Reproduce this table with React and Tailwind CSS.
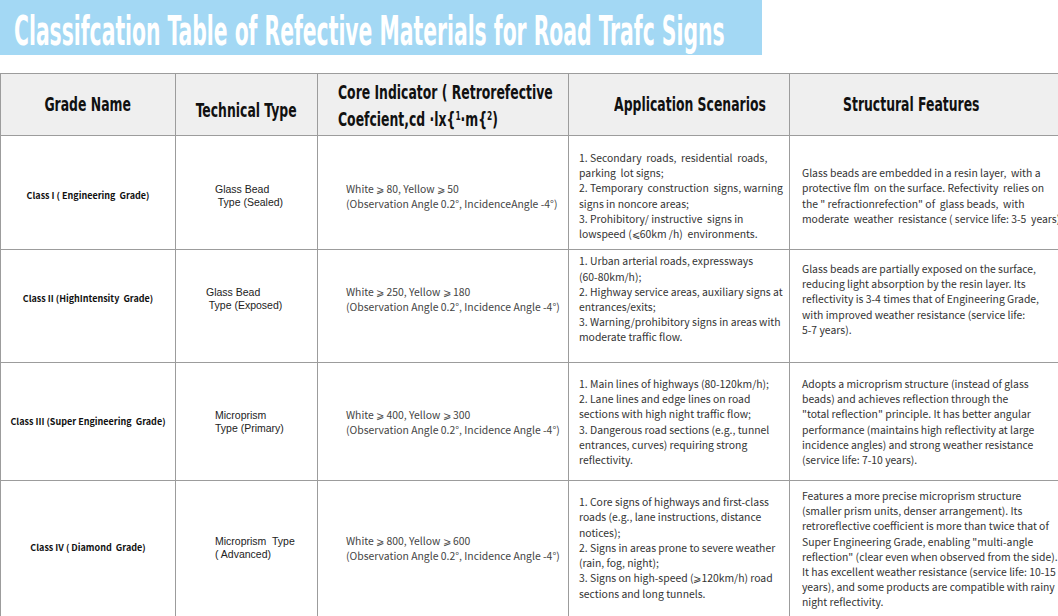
import React from "react";

const rows = [
  {
    grade: "Class I ( Engineering  Grade)",
    tech: ["Glass Bead", " Type (Sealed)"],
    techPad: "pl-[39px]",
    core: ["White ⩾ 80, Yellow ⩾ 50", "(Observation Angle 0.2°, IncidenceAngle -4°)"],
    app: [
      "1. Secondary  roads,  residential  roads,",
      "parking  lot signs;",
      "2. Temporary  construction  signs, warning",
      "signs in noncore areas;",
      "3. Prohibitory/ instructive  signs in",
      "lowspeed (⩽60km /h)  environments.",
    ],
    feat: [
      "Glass beads are embedded in a resin layer,  with a",
      "protective flm  on the surface. Refectivity  relies on",
      "the \" refractionrefection\" of  glass beads,  with",
      "moderate  weather  resistance ( service life: 3-5  years).",
    ],
    h: "h-[114px]",
    shift: "pt-[6px]",
    featAlign: "items-center pt-[6px]",
  },
  {
    grade: "Class II (HighIntensity  Grade)",
    tech: ["Glass Bead", " Type (Exposed)"],
    techPad: "pl-[30px]",
    core: ["White ⩾ 250, Yellow ⩾ 180", "(Observation Angle 0.2°, Incidence Angle -4°)"],
    app: [
      "1. Urban arterial roads, expressways",
      "(60-80km/h);",
      "2. Highway service areas, auxiliary signs at",
      "entrances/exits;",
      "3. Warning/prohibitory signs in areas with",
      "moderate traffic flow.",
    ],
    feat: [
      "Glass beads are partially exposed on the surface,",
      "reducing light absorption by the resin layer. Its",
      "reflectivity is 3-4 times that of Engineering Grade,",
      "with improved weather resistance (service life:",
      "5-7 years).",
    ],
    h: "h-[113px]",
    shift: "pb-[14px]",
    featAlign: "items-start pt-[11px]",
  },
  {
    grade: "Class III (Super Engineering  Grade)",
    tech: ["Microprism", "Type (Primary)"],
    techPad: "pl-[39px]",
    core: ["White ⩾ 400, Yellow ⩾ 300", "(Observation Angle 0.2°, Incidence Angle -4°)"],
    app: [
      "1. Main lines of highways (80-120km/h);",
      "2. Lane lines and edge lines on road",
      "sections with high night traffic flow;",
      "3. Dangerous road sections (e.g., tunnel",
      "entrances, curves) requiring strong",
      "reflectivity.",
    ],
    feat: [
      "Adopts a microprism structure (instead of glass",
      "beads) and achieves reflection through the",
      "\"total reflection\" principle. It has better angular",
      "performance (maintains high reflectivity at large",
      "incidence angles) and strong weather resistance",
      "(service life: 7-10 years).",
    ],
    h: "h-[118px]",
    shift: "",
    featAlign: "items-center",
  },
  {
    grade: "Class IV ( Diamond  Grade)",
    tech: ["Microprism  Type", "( Advanced)"],
    techPad: "pl-[39px]",
    core: ["White ⩾ 800, Yellow ⩾ 600", "(Observation Angle 0.2°, Incidence Angle -4°)"],
    app: [
      "1. Core signs of highways and first-class",
      "roads (e.g., lane instructions, distance",
      "notices);",
      "2. Signs in areas prone to severe weather",
      "(rain, fog, night);",
      "3. Signs on high-speed (⩾120km/h) road",
      "sections and long tunnels.",
    ],
    feat: [
      "Features a more precise microprism structure",
      "(smaller prism units, denser arrangement). Its",
      "retroreflective coefficient is more than twice that of",
      "Super Engineering Grade, enabling \"multi-angle",
      "reflection\" (clear even when observed from the side).",
      "It has excellent weather resistance (service life: 10-15",
      "years), and some products are compatible with rainy",
      "night reflectivity.",
    ],
    h: "h-[140px]",
    shift: "pb-[6px]",
    featAlign: "items-start pt-[7px]",
  },
];

const cell = "border-r border-b border-[#9c9c9c] flex";
const head =
  "font-['DejaVu_Sans_Condensed','DejaVu_Sans',sans-serif] font-bold text-[20px] text-[#111] inline-block whitespace-nowrap scale-x-[0.69]";
const body = "font-['Noto_Sans_CJK_SC','Noto_Sans',sans-serif]";

export default function App() {
  return (
    <div className="w-[1058px] h-[616px] overflow-hidden bg-white">
      {/* Title banner */}
      <div className="w-[762px] h-[55px] bg-[#a3d8f4] flex items-center pl-[14px] overflow-hidden">
        <span className="font-['DejaVu_Sans_Condensed','DejaVu_Sans',sans-serif] font-bold text-[40px] leading-[40px] text-white whitespace-nowrap inline-block scale-x-[0.565] origin-left mt-[6px]">
          Classifcation Table of Refective Materials for Road Trafc Signs
        </span>
      </div>

      {/* Table */}
      <div className="mt-[18px] w-[1100px] grid grid-cols-[175px_142px_251px_221px_311px] border-t border-l border-[#9c9c9c]">
        {/* Header */}
        <div className={`${cell} h-[62px] bg-[#efefef] items-center justify-center`}>
          <span className={`${head} mb-[1px]`}>Grade Name</span>
        </div>
        <div className={`${cell} h-[62px] bg-[#efefef] items-center justify-center`}>
          <span className={`${head} mt-[10px]`}>Technical Type</span>
        </div>
        <div className={`${cell} h-[62px] bg-[#efefef] items-center pl-[20px]`}>
          <div className="flex flex-col leading-[24px] mt-[2px]">
            <span className={`${head} origin-left`}>Core Indicator ( Retrorefective</span>
            <span className={`${head} origin-left`}>
              Coefcient,cd ·lx{"{"}
              <span className="text-[12px] align-[6px]">1</span>·m{"{"}
              <span className="text-[12px] align-[6px]">2</span>)
            </span>
          </div>
        </div>
        <div className={`${cell} h-[62px] bg-[#efefef] items-center justify-center pl-[22px]`}>
          <span className={`${head} mb-[1px]`}>Application Scenarios</span>
        </div>
        <div className={`${cell} h-[62px] bg-[#efefef] items-center pl-[53px]`}>
          <span className={`${head} origin-left mb-[2px]`}>Structural Features</span>
        </div>

        {/* Body rows */}
        {rows.map((r, i) => (
          <React.Fragment key={i}>
            <div className={`${cell} ${r.h} ${r.shift} items-center justify-center`}>
              <span className={`${body} font-bold text-[9px] text-[#111] whitespace-pre`}>
                {r.grade}
              </span>
            </div>
            <div className={`${cell} ${r.h} ${r.shift} items-center ${r.techPad}`}>
              <div className="font-['Liberation_Sans',Arial,sans-serif] text-[10.5px] leading-[13px] text-[#222] whitespace-pre">
                {r.tech.map((t, j) => (
                  <div key={j}>{t}</div>
                ))}
              </div>
            </div>
            <div className={`${cell} ${r.h} ${r.shift} items-center pl-[28px]`}>
              <div className={`${body} text-[10.4px] leading-[15px] text-[#444] whitespace-pre`}>
                {r.core.map((t, j) => (
                  <div key={j}>{t}</div>
                ))}
              </div>
            </div>
            <div className={`${cell} ${r.h} ${r.shift} items-center pl-[10px]`}>
              <div className={`${body} text-[10.4px] leading-[15.2px] text-[#333] whitespace-pre`}>
                {r.app.map((t, j) => (
                  <div key={j}>{t}</div>
                ))}
              </div>
            </div>
            <div className={`${cell} ${r.h} ${r.featAlign} pl-[12px]`}>
              <div className={`${body} text-[10.4px] leading-[15.2px] text-[#333] whitespace-pre`}>
                {r.feat.map((t, j) => (
                  <div key={j}>{t}</div>
                ))}
              </div>
            </div>
          </React.Fragment>
        ))}
      </div>
    </div>
  );
}
